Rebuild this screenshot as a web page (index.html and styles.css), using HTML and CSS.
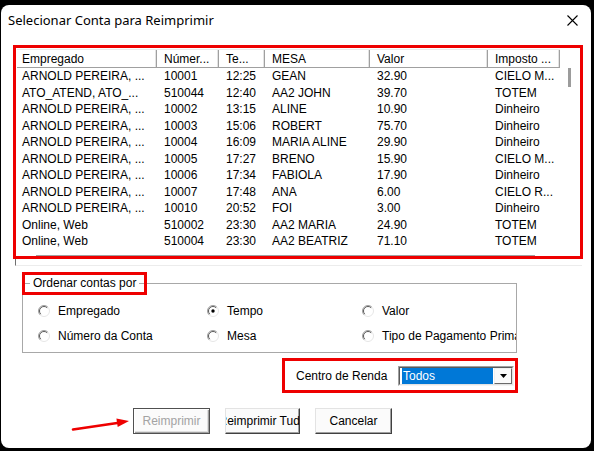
FILE: index.html
```html
<!DOCTYPE html>
<html lang="pt">
<head>
<meta charset="utf-8">
<title>Selecionar Conta para Reimprimir</title>
<link rel="stylesheet" href="styles.css">
</head>
<body>
<div class="window">
  <div class="titlebar">
    <span class="title">Selecionar Conta para Reimprimir</span>
    <svg class="close" width="11" height="11" viewBox="0 0 11 11"><path d="M0.5 0.5 L10.5 10.5 M10.5 0.5 L0.5 10.5" stroke="#000" stroke-width="1.1" fill="none"/></svg>
  </div>

  <div class="list">
    <div class="table">
      <div class="row head">
        <div class="c c1">Empregado</div><div class="c">Númer...</div><div class="c">Te...</div><div class="c">MESA</div><div class="c">Valor</div><div class="c">Imposto ...</div>
      </div>
      <div class="row"><div class="c c1">ARNOLD PEREIRA, ...</div><div class="c">10001</div><div class="c">12:25</div><div class="c">GEAN</div><div class="c">32.90</div><div class="c">CIELO M...</div></div>
      <div class="row"><div class="c c1">ATO_ATEND, ATO_...</div><div class="c">510044</div><div class="c">12:40</div><div class="c">AA2 JOHN</div><div class="c">39.70</div><div class="c">TOTEM</div></div>
      <div class="row"><div class="c c1">ARNOLD PEREIRA, ...</div><div class="c">10002</div><div class="c">13:15</div><div class="c">ALINE</div><div class="c">10.90</div><div class="c">Dinheiro</div></div>
      <div class="row"><div class="c c1">ARNOLD PEREIRA, ...</div><div class="c">10003</div><div class="c">15:06</div><div class="c">ROBERT</div><div class="c">75.70</div><div class="c">Dinheiro</div></div>
      <div class="row"><div class="c c1">ARNOLD PEREIRA, ...</div><div class="c">10004</div><div class="c">16:09</div><div class="c">MARIA ALINE</div><div class="c">29.90</div><div class="c">Dinheiro</div></div>
      <div class="row"><div class="c c1">ARNOLD PEREIRA, ...</div><div class="c">10005</div><div class="c">17:27</div><div class="c">BRENO</div><div class="c">15.90</div><div class="c">CIELO M...</div></div>
      <div class="row"><div class="c c1">ARNOLD PEREIRA, ...</div><div class="c">10006</div><div class="c">17:34</div><div class="c">FABIOLA</div><div class="c">17.90</div><div class="c">Dinheiro</div></div>
      <div class="row"><div class="c c1">ARNOLD PEREIRA, ...</div><div class="c">10007</div><div class="c">17:48</div><div class="c">ANA</div><div class="c">6.00</div><div class="c">CIELO R...</div></div>
      <div class="row"><div class="c c1">ARNOLD PEREIRA, ...</div><div class="c">10010</div><div class="c">20:52</div><div class="c">FOI</div><div class="c">3.00</div><div class="c">Dinheiro</div></div>
      <div class="row"><div class="c c1">Online, Web</div><div class="c">510002</div><div class="c">23:30</div><div class="c">AA2 MARIA</div><div class="c">24.90</div><div class="c">TOTEM</div></div>
      <div class="row"><div class="c c1">Online, Web</div><div class="c">510004</div><div class="c">23:30</div><div class="c">AA2 BEATRIZ</div><div class="c">71.10</div><div class="c">TOTEM</div></div>
      <div class="hscroll"></div>
    </div>
    <div class="vscroll"><div class="thumb"></div></div>
  </div>
  <div class="list-edge"></div>

  <fieldset class="group">
    <legend class="legend"><span>Ordenar contas por</span></legend>
    <div class="radios">
      <div class="radio"><svg width="12" height="12" viewBox="0 0 12 12"><circle cx="6" cy="6" r="5.3" fill="#fff"/><path d="M9.9 2.1 A5.5 5.5 0 0 0 2.1 9.9" stroke="#a0a0a0" fill="none"/><path d="M9.2 2.8 A4.5 4.5 0 0 0 2.8 9.2" stroke="#5a5a5a" fill="none"/><path d="M2.1 9.9 A5.5 5.5 0 0 0 9.9 2.1" stroke="#e6e6e6" fill="none"/></svg><span>Empregado</span></div>
      <div class="radio"><svg width="12" height="12" viewBox="0 0 12 12"><circle cx="6" cy="6" r="5.3" fill="#fff"/><path d="M9.9 2.1 A5.5 5.5 0 0 0 2.1 9.9" stroke="#a0a0a0" fill="none"/><path d="M9.2 2.8 A4.5 4.5 0 0 0 2.8 9.2" stroke="#5a5a5a" fill="none"/><path d="M2.1 9.9 A5.5 5.5 0 0 0 9.9 2.1" stroke="#e6e6e6" fill="none"/><circle cx="6" cy="6" r="1.7" fill="#000"/></svg><span>Tempo</span></div>
      <div class="radio"><svg width="12" height="12" viewBox="0 0 12 12"><circle cx="6" cy="6" r="5.3" fill="#fff"/><path d="M9.9 2.1 A5.5 5.5 0 0 0 2.1 9.9" stroke="#a0a0a0" fill="none"/><path d="M9.2 2.8 A4.5 4.5 0 0 0 2.8 9.2" stroke="#5a5a5a" fill="none"/><path d="M2.1 9.9 A5.5 5.5 0 0 0 9.9 2.1" stroke="#e6e6e6" fill="none"/></svg><span>Valor</span></div>
      <div class="radio"><svg width="12" height="12" viewBox="0 0 12 12"><circle cx="6" cy="6" r="5.3" fill="#fff"/><path d="M9.9 2.1 A5.5 5.5 0 0 0 2.1 9.9" stroke="#a0a0a0" fill="none"/><path d="M9.2 2.8 A4.5 4.5 0 0 0 2.8 9.2" stroke="#5a5a5a" fill="none"/><path d="M2.1 9.9 A5.5 5.5 0 0 0 9.9 2.1" stroke="#e6e6e6" fill="none"/></svg><span>Número da Conta</span></div>
      <div class="radio"><svg width="12" height="12" viewBox="0 0 12 12"><circle cx="6" cy="6" r="5.3" fill="#fff"/><path d="M9.9 2.1 A5.5 5.5 0 0 0 2.1 9.9" stroke="#a0a0a0" fill="none"/><path d="M9.2 2.8 A4.5 4.5 0 0 0 2.8 9.2" stroke="#5a5a5a" fill="none"/><path d="M2.1 9.9 A5.5 5.5 0 0 0 9.9 2.1" stroke="#e6e6e6" fill="none"/></svg><span>Mesa</span></div>
      <div class="radio"><svg width="12" height="12" viewBox="0 0 12 12"><circle cx="6" cy="6" r="5.3" fill="#fff"/><path d="M9.9 2.1 A5.5 5.5 0 0 0 2.1 9.9" stroke="#a0a0a0" fill="none"/><path d="M9.2 2.8 A4.5 4.5 0 0 0 2.8 9.2" stroke="#5a5a5a" fill="none"/><path d="M2.1 9.9 A5.5 5.5 0 0 0 9.9 2.1" stroke="#e6e6e6" fill="none"/></svg><span>Tipo de Pagamento Primário</span></div>
    </div>
  </fieldset>

  <div class="centro">
    <span class="centro-label">Centro de Renda</span>
    <div class="combo">
      <div class="combo-inner">
        <div class="combo-sel">Todos</div>
        <div class="combo-btn"><svg width="7" height="4" viewBox="0 0 7 4"><path d="M0 0 H7 L3.5 4 Z" fill="#000"/></svg></div>
      </div>
    </div>
  </div>

  <div class="buttons">
    <div class="btn btn-default disabled"><span>Reimprimir</span></div>
    <div class="btn btn-narrow"><span>Reimprimir Tudo</span></div>
    <div class="btn"><span>Cancelar</span></div>
  </div>

  <svg class="arrow" width="64" height="16" viewBox="0 0 64 16"><path d="M3 11.5 L49 4.8" stroke="#ee0000" stroke-width="2.6" stroke-linecap="round" fill="none"/><path d="M59 3 L47.7 8.9 L46.4 0.6 Z" fill="#ee0000"/></svg>
</div>
</body>
</html>
```

FILE: styles.css
```css
html, body {
  margin: 0;
  padding: 0;
  background: #000;
  width: 594px;
  height: 451px;
  overflow: hidden;
}

.window {
  position: relative;
  margin: 5px 0 0 1px;
  width: 590px;
  height: 443px;
  background: #fff;
  border-radius: 8px;
  overflow: hidden;
  font-family: "Liberation Sans", Arial, sans-serif;
  font-size: 12px;
  color: #000;
}

.titlebar {
  height: 30px;
  display: flex;
  align-items: center;
  justify-content: space-between;
  padding: 0 13px 0 7px;
}

.title {
  font-family: "Noto Sans", "Open Sans", sans-serif;
  font-size: 13px;
  color: #000;
}

.close {
  display: block;
}

.list {
  margin: 10px 0 0 12px;
  width: 570px;
  height: 214px;
  box-sizing: border-box;
  border: 3px solid #ee0000;
  display: flex;
  padding: 1px 0 0 1px;
}

.table {
  width: 543px;
  display: flex;
  flex-direction: column;
}

.row {
  display: grid;
  grid-template-columns: 140px 62px 46px 105px 118px 72px;
  height: 16.5px;
  line-height: 17px;
  white-space: nowrap;
}

.row.head {
  height: 19px;
  line-height: 19px;
  box-sizing: border-box;
  border-top: 1px solid #ececec;
  border-bottom: 1px solid #a0a0a0;
}

.head .c {
  border-right: 1px solid #a0a0a0;
  box-shadow: inset -1px 0 #e3e3e3;
}

.c {
  padding-left: 7px;
  overflow: hidden;
}

.c1 {
  padding-left: 5px;
}

.hscroll {
  margin: auto 0 0 19px;
  width: 499px;
  height: 1px;
  background: #a0a0a0;
}

.vscroll {
  width: 20px;
  padding: 19px 0 0 8px;
  box-sizing: border-box;
}

.thumb {
  width: 3px;
  height: 19px;
  background: #9c9c9c;
}

.list-edge {
  margin-left: 14px;
  width: 566px;
  height: 6px;
  border-left: 1px solid #707070;
  border-bottom: 1px solid #ececec;
}

.group {
  margin: 6px 0 0 21px;
  padding: 0;
  width: 495px;
  height: 81px;
  box-sizing: border-box;
  border: 1px solid #a8a8a8;
  min-width: 0;
}

.legend {
  margin-left: -1px;
  padding: 0 5px;
  height: 23px;
  box-sizing: border-box;
  border: 3px solid #ee0000;
  line-height: 17px;
  background: linear-gradient(to bottom, transparent 8px, #a8a8a8 8px, #a8a8a8 9px, transparent 9px);
}

.legend span {
  background: #fff;
  padding: 0 3px;
}

.radios {
  display: grid;
  grid-template-columns: 169px 155px 1fr;
  grid-template-rows: 25px 25px;
  padding: 3px 0 0 15px;
  overflow: hidden;
  white-space: nowrap;
}

.radio {
  display: flex;
  align-items: center;
  gap: 8px;
}

.radio svg {
  flex: none;
  display: block;
}

.centro {
  margin: 5px 0 0 281px;
  width: 236px;
  height: 35px;
  box-sizing: border-box;
  border: 3px solid #ee0000;
  display: flex;
  align-items: center;
  padding: 0 1px 0 11px;
}

.centro-label {
  flex: 1;
}

.combo {
  width: 116px;
  height: 20px;
  box-sizing: border-box;
  border: 1px solid;
  border-color: #a0a0a0 #f4f4f4 #f4f4f4 #a0a0a0;
}

.combo-inner {
  height: 100%;
  box-sizing: border-box;
  border: 1px solid;
  border-color: #5a5a5a #e3e3e3 #e3e3e3 #5a5a5a;
  display: flex;
  background: #fff;
}

.combo-sel {
  margin-left: 2px;
  width: 91px;
  background: #0078d7;
  color: #fff;
  line-height: 16px;
  padding-left: 1px;
  box-sizing: border-box;
}

.combo-btn {
  margin-left: 1px;
  flex: 1;
  box-sizing: border-box;
  border: 1px solid;
  border-color: #f0f0f0 #6a6a6a #6a6a6a #f0f0f0;
  background: #fafafa;
  display: flex;
  align-items: center;
  justify-content: center;
}

.combo-btn svg {
  display: block;
}

.buttons {
  margin: 15px 0 0 132px;
  display: flex;
  gap: 15px;
}

.btn {
  width: 77px;
  height: 26px;
  box-sizing: border-box;
  border: 1px solid;
  border-color: #e3e3e3 #404040 #404040 #e3e3e3;
  box-shadow: inset -1px -1px #a0a0a0;
  background: #fbfbfb;
  display: flex;
  align-items: center;
  justify-content: center;
  overflow: hidden;
  white-space: nowrap;
  padding: 0 2px 1px;
}

.btn-narrow {
  width: 75px;
}

.btn-default {
  border-color: #505050;
  box-shadow: inset 1px 1px #fff, inset -1px -1px #a0a0a0, inset -2px -2px #e0e0e0;
}

.disabled {
  color: #a3a3a3;
}

.arrow {
  position: absolute;
  left: 69px;
  top: 413px;
}
```
